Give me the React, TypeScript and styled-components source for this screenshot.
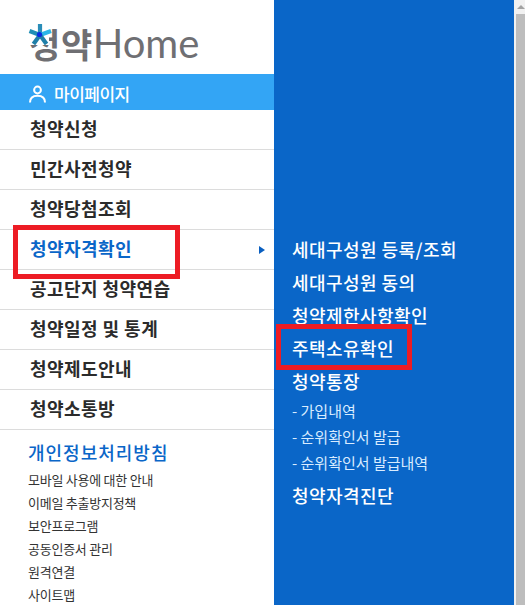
import React from "react";
import styled, { createGlobalStyle } from "styled-components";

const Global = createGlobalStyle`
  html, body { margin: 0; padding: 0; height: 605px; overflow: hidden; background: #fff; }
  * { box-sizing: border-box; }
  body { font-family: "Noto Sans CJK KR", "Noto Sans", sans-serif; }
`;

const Page = styled.div`
  display: flex;
  width: 525px;
  height: 605px;
  overflow: hidden;
`;

const Nav = styled.nav`
  width: 274px;
  flex: none;
  position: relative;
  background: #fff;
`;

const LogoRow = styled.div`
  height: 74px;
  padding: 20px 0 0 29px;
  display: flex;
  align-items: flex-start;
`;

const Logo = styled.div`
  position: relative;
  display: flex;
  align-items: flex-start;
  color: #6f6f73;
`;

const LogoKo = styled.span`
  font-size: 34px;
  line-height: 48px;
  font-weight: 700;
  letter-spacing: 0.6px;
`;

const LogoEn = styled.span`
  font-family: "Lato", sans-serif;
  font-size: 40px;
  line-height: 48px;
  font-weight: 400;
  margin-left: 0;
  margin-top: -1px;
`;

const LogoStar = styled.svg`
  position: absolute;
  left: -1px;
  top: 2px;
`;

const MyPage = styled.div`
  height: 36px;
  background: #33a5f5;
  color: #fff;
  display: flex;
  align-items: center;
  padding: 3px 0 0 29px;
  gap: 8px;
  font-size: 17px;
  font-weight: 500;
  letter-spacing: -0.5px;
`;

const MenuList = styled.ul`
  list-style: none;
  margin: 0;
  padding: 0;
`;

const MenuRow = styled.li<{ $active?: boolean }>`
  height: 40px;
  border-bottom: 1px solid #dcdcdc;
  display: flex;
  align-items: center;
  justify-content: space-between;
  padding: 0 9px 3px 30px;
  font-size: 18px;
  font-weight: 700;
  letter-spacing: 0.45px;
  color: ${(p) => (p.$active ? "#0a66c8" : "#2b2b2b")};
`;

const Caret = styled.span`
  width: 0;
  height: 0;
  margin-top: 3px;
  border-left: 6px solid #0a5fc0;
  border-top: 4px solid transparent;
  border-bottom: 4px solid transparent;
`;

const FooterBlock = styled.div`
  padding: 9px 0 0 28px;
`;

const FooterTitle = styled.div`
  font-size: 18px;
  font-weight: 500;
  line-height: 26px;
  letter-spacing: 1px;
  color: #0a66c8;
  margin-bottom: 3px;
`;

const FooterLink = styled.div`
  font-size: 13px;
  line-height: 23px;
  letter-spacing: -0.25px;
  color: #333;
`;

const Panel = styled.section`
  position: relative;
  width: 240px;
  flex: none;
  background: #0a66c8;
  padding: 233px 0 0 18px;
  color: #fff;
`;

const PanelItem = styled.div<{ $gap?: boolean }>`
  font-size: 18px;
  font-weight: 500;
  letter-spacing: 0.45px;
  line-height: 33px;
  margin-top: ${(p) => (p.$gap ? 3 : 0)}px;
`;

const PanelSub = styled.div`
  font-size: 15px;
  font-weight: 400;
  line-height: 26px;
  color: #d9ecff;
`;

const Scrollbar = styled.div`
  flex: none;
  width: 11px;
  background: #f1f1f1;
  display: flex;
  flex-direction: column;
  align-items: flex-end;
`;

const ScrollArrow = styled.div`
  width: 9px;
  height: 14px;
  display: flex;
  justify-content: center;
  align-items: center;
`;

const ScrollUp = styled.span`
  width: 0;
  height: 0;
  border-bottom: 4px solid #a3a3a3;
  border-left: 4px solid transparent;
  border-right: 4px solid transparent;
`;

const ScrollThumb = styled.div`
  width: 9px;
  flex: 1;
  background: #bdbdbd;
`;

const RedBox = styled.div<{ $x: number; $y: number; $w: number; $h: number }>`
  position: absolute;
  left: ${(p) => p.$x}px;
  top: ${(p) => p.$y}px;
  width: ${(p) => p.$w}px;
  height: ${(p) => p.$h}px;
  border: 5px solid #ed1c24;
  pointer-events: none;
`;

/* The star stands in for the first consonant of the logo's first syllable. */
const Star = () => (
  <LogoStar width="24" height="26" viewBox="0 0 24 26">
    <rect x="0" y="0" width="21" height="23" fill="#fff" />
    <g strokeWidth="4.2" fill="none">
      <path d="M12 13 L12 2" stroke="#2a8db8" />
      <path d="M12 13 L23 9" stroke="#29b6e8" />
      <path d="M12 13 L18.5 22" stroke="#1f7fa8" />
      <path d="M12 13 L5.5 22" stroke="#1f7fa8" />
      <path d="M12 13 L1.5 9" stroke="#1f8eb5" />
    </g>
    <circle cx="11.5" cy="12.5" r="2.6" fill="#0a2be0" />
  </LogoStar>
);

const User = () => (
  <svg width="17" height="18" viewBox="0 0 17 18" fill="none" stroke="#fff" strokeWidth="2">
    <circle cx="8.5" cy="5" r="3.4" />
    <path d="M1 17.5 C1 12.5 4.5 10.8 8.5 10.8 C12.5 10.8 16 12.5 16 17.5" />
  </svg>
);

const menu = [
  "청약신청",
  "민간사전청약",
  "청약당첨조회",
  "청약자격확인",
  "공고단지 청약연습",
  "청약일정 및 통계",
  "청약제도안내",
  "청약소통방",
];

const links = [
  "모바일 사용에 대한 안내",
  "이메일 추출방지정책",
  "보안프로그램",
  "공동인증서 관리",
  "원격연결",
  "사이트맵",
];

export default function App() {
  return (
    <Page>
      <Global />
      <Nav>
        <LogoRow>
          <Logo>
            <LogoKo>청약</LogoKo>
            <Star />
            <LogoEn>Home</LogoEn>
          </Logo>
        </LogoRow>
        <MyPage>
          <User />
          마이페이지
        </MyPage>
        <MenuList>
          {menu.map((m) => (
            <MenuRow key={m} $active={m === "청약자격확인"}>
              {m}
              {m === "청약자격확인" && <Caret />}
            </MenuRow>
          ))}
        </MenuList>
        <FooterBlock>
          <FooterTitle>개인정보처리방침</FooterTitle>
          {links.map((l) => (
            <FooterLink key={l}>{l}</FooterLink>
          ))}
        </FooterBlock>
        <RedBox $x={13} $y={225} $w={167} $h={54} />
      </Nav>
      <Panel>
        <PanelItem>세대구성원 등록/조회</PanelItem>
        <PanelItem>세대구성원 동의</PanelItem>
        <PanelItem>청약제한사항확인</PanelItem>
        <PanelItem>주택소유확인</PanelItem>
        <PanelItem>청약통장</PanelItem>
        <PanelSub>- 가입내역</PanelSub>
        <PanelSub>- 순위확인서 발급</PanelSub>
        <PanelSub>- 순위확인서 발급내역</PanelSub>
        <PanelItem $gap>청약자격진단</PanelItem>
        <RedBox $x={2} $y={324} $w={136} $h={46} />
      </Panel>
      <Scrollbar>
        <ScrollArrow>
          <ScrollUp />
        </ScrollArrow>
        <ScrollThumb />
      </Scrollbar>
    </Page>
  );
}
